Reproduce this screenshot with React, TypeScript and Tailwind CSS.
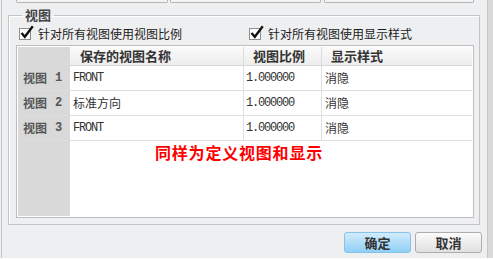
import React from "react";

const rows = [
  { id: 1, name: "FRONT", mono: true, scale: "1.000000", style: "消隐" },
  { id: 2, name: "标准方向", mono: false, scale: "1.000000", style: "消隐" },
  { id: 3, name: "FRONT", mono: true, scale: "1.000000", style: "消隐" },
];

const Check = ({ label, className }: { label: string; className?: string }) => (
  <label className={`flex items-center gap-[7px] ${className ?? ""}`}>
    <span className="relative w-[12px] h-[12px] shrink-0 border border-[#8e8e8e] bg-white">
      <svg
        className="absolute -top-[4px] left-[0px] w-[14px] h-[14px]"
        viewBox="0 0 14 14"
      >
        <path
          d="M1.5 8 L4.8 11.8 L12.8 1.2"
          stroke="#111"
          strokeWidth={2.3}
          fill="none"
        />
      </svg>
    </span>
    <span className="text-[12px] leading-[15px] text-[#1c1c1c]">{label}</span>
  </label>
);

export default function App() {
  return (
    <div className="w-[493px] h-[259px] overflow-hidden flex bg-[#eeeff1] border-b border-white font-['Noto_Sans_CJK_SC',sans-serif]">
      <div className="w-[1px]" />

      {/* main column */}
      <div className="flex-1 flex flex-col border-l border-[#c6c6c6]">
        {/* bottoms of the controls cut off at the top */}
        <div className="flex h-[3px] pl-[14px]">
          <div className="w-[152px] border-x border-b border-[#b5b5b5] rounded-b-[2px] bg-[#f4f4f4]" />
          <div className="w-[151px] ml-[2px] border-x border-b border-[#b5b5b5] rounded-b-[2px] bg-[#f4f4f4]" />
          <div className="w-[150px] ml-[3px] border-x border-b border-[#b5b5b5] rounded-b-[2px] bg-[#f4f4f4]" />
        </div>

        {/* 视图 group */}
        <fieldset className="mt-[5px] ml-[6px] w-[472px] h-[217px] border border-[#c4c4c4] shadow-[inset_1px_1px_0_#fff]">
          <legend className="ml-[13px] px-[3px] text-[13px] leading-[14px] font-bold text-[#444]">
            视图
          </legend>

          <div className="flex mt-[4px] pl-[10px] h-[15px] items-center">
            <Check label="针对所有视图使用视图比例" className="w-[230px]" />
            <Check label="针对所有视图使用显示样式" />
          </div>

          {/* table */}
          <div className="mt-[4px] ml-[7px] w-[458px] h-[173px] border border-[#bdbdbd] bg-white p-[1px] flex flex-col">
            <div className="grid grid-cols-[52px_174px_78px_1fr] h-[19px] shrink-0 border-b border-[#d8d8d8] bg-gradient-to-b from-[#fafafa] to-[#ededed] text-[13px] leading-[18px] font-bold text-[#333]">
              <div className="bg-[#d9d9d9]" />
              <div className="pl-[10px] border-r border-[#dcdcdc]">保存的视图名称</div>
              <div className="pl-[9px] border-r border-[#dcdcdc]">视图比例</div>
              <div className="pl-[9px]">显示样式</div>
            </div>

            {rows.map((r) => (
              <div
                key={r.id}
                className="grid grid-cols-[52px_174px_78px_1fr] h-[25px] shrink-0 border-b border-[#dedede] text-[12px] leading-[24px] text-[#333]"
              >
                <div className="flex bg-[#d9d9d9] pl-[5px] font-bold text-[#555]">
                  <span>视图</span>
                  <span className="ml-[8px] font-['Liberation_Mono',monospace]">{r.id}</span>
                </div>
                <div
                  className={
                    r.mono
                      ? "pl-[3px] border-r border-[#dedede] font-['Liberation_Mono',monospace] tracking-[-1.2px]"
                      : "pl-[3px] border-r border-[#dedede]"
                  }
                >
                  {r.name}
                </div>
                <div className="pl-[2px] border-r border-[#dedede] font-['Liberation_Mono',monospace] tracking-[-1.2px]">
                  {r.scale}
                </div>
                <div className="pl-[3px]">{r.style}</div>
              </div>
            ))}

            {/* empty area */}
            <div className="flex-1 grid grid-cols-[52px_1fr]">
              <div className="bg-[#d9d9d9]" />
              <div className="pl-[85px] pt-[3px] text-[16px] leading-[16px] font-bold tracking-[0.8px] text-[#ff0000]">
                同样为定义视图和显示
              </div>
            </div>
          </div>
        </fieldset>

        {/* buttons */}
        <div className="flex justify-end gap-[4px] mt-[7px] pr-[5px]">
          <button
            type="button"
            className="w-[67px] h-[21px] rounded-[3px] border border-[#86c2ea] bg-gradient-to-b from-[#d2ecfc] to-[#8fcff5] text-[13px] leading-[19px] font-bold text-[#333]"
          >
            确定
          </button>
          <button
            type="button"
            className="w-[67px] h-[21px] rounded-[3px] border border-[#adadad] bg-gradient-to-b from-[#fcfcfc] to-[#e0e0e0] text-[13px] leading-[19px] font-bold text-[#333]"
          >
            取消
          </button>
        </div>
      </div>

      {/* right edge strip */}
      <div className="w-[6px] border-l border-[#c6c6c6] bg-[#dadada]" />
    </div>
  );
}
